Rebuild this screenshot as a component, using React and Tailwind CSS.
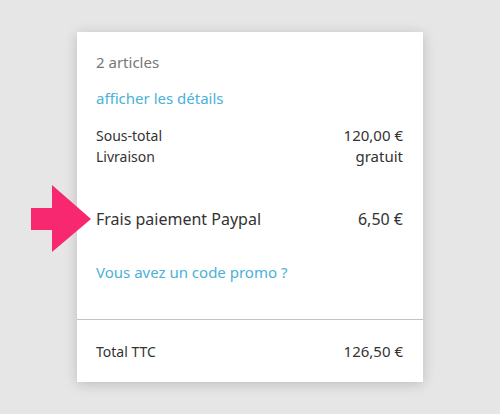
import React from 'react';

const ArrowMarker = () => (
  <svg
    className="absolute left-[31px] top-[185px]"
    width="61"
    height="68"
    viewBox="0 0 61 68"
  >
    <polygon points="0,23 21,23 21,0 60,34 21,67 21,45 0,45" fill="#f7286f" />
  </svg>
);

const Row = ({ label, value, className = '' }) => (
  <div className={`flex items-center justify-between ${className}`}>
    <span>{label}</span>
    <span>{value}</span>
  </div>
);

export default function App() {
  return (
    <div
      className="relative w-[500px] h-[414px] bg-[#e6e6e6] pt-[32px] pl-[77px]"
      style={{ fontFamily: '"Noto Sans", "Open Sans", sans-serif' }}
    >
      <div className="w-[346px] bg-white shadow-[0_2px_12px_rgba(0,0,0,0.18)] text-[#333]">
        <div className="px-[19px] pr-[20px] pt-[20px] pb-[37px]">
          <div className="text-[15px] leading-[20px] text-[#777]">2 articles</div>
          <div className="mt-[16px] text-[15px] leading-[20px] text-[#4bb1d6]">afficher les détails</div>

          <div className="mt-[17px] text-[14px] leading-[21px]">
            <Row label="Sous-total" value={<span className="text-[15px]">120,00 €</span>} />
            <Row label="Livraison" value={<span className="text-[15px]">gratuit</span>} />
          </div>

          <Row
            className="mt-[41px] text-[16px] leading-[22px]"
            label="Frais paiement Paypal"
            value="6,50 €"
          />

          <div className="mt-[32px] text-[15px] leading-[20px] text-[#4bb1d6]">
            Vous avez un code promo ?
          </div>
        </div>

        <div className="border-t border-[#c4c4c4] px-[19px] pr-[20px] pt-[21px] pb-[20px]">
          <Row
            className="text-[14px] leading-[20px]"
            label="Total TTC"
            value={<span className="text-[15px]">126,50 €</span>}
          />
        </div>
      </div>
      <ArrowMarker />
    </div>
  );
}
